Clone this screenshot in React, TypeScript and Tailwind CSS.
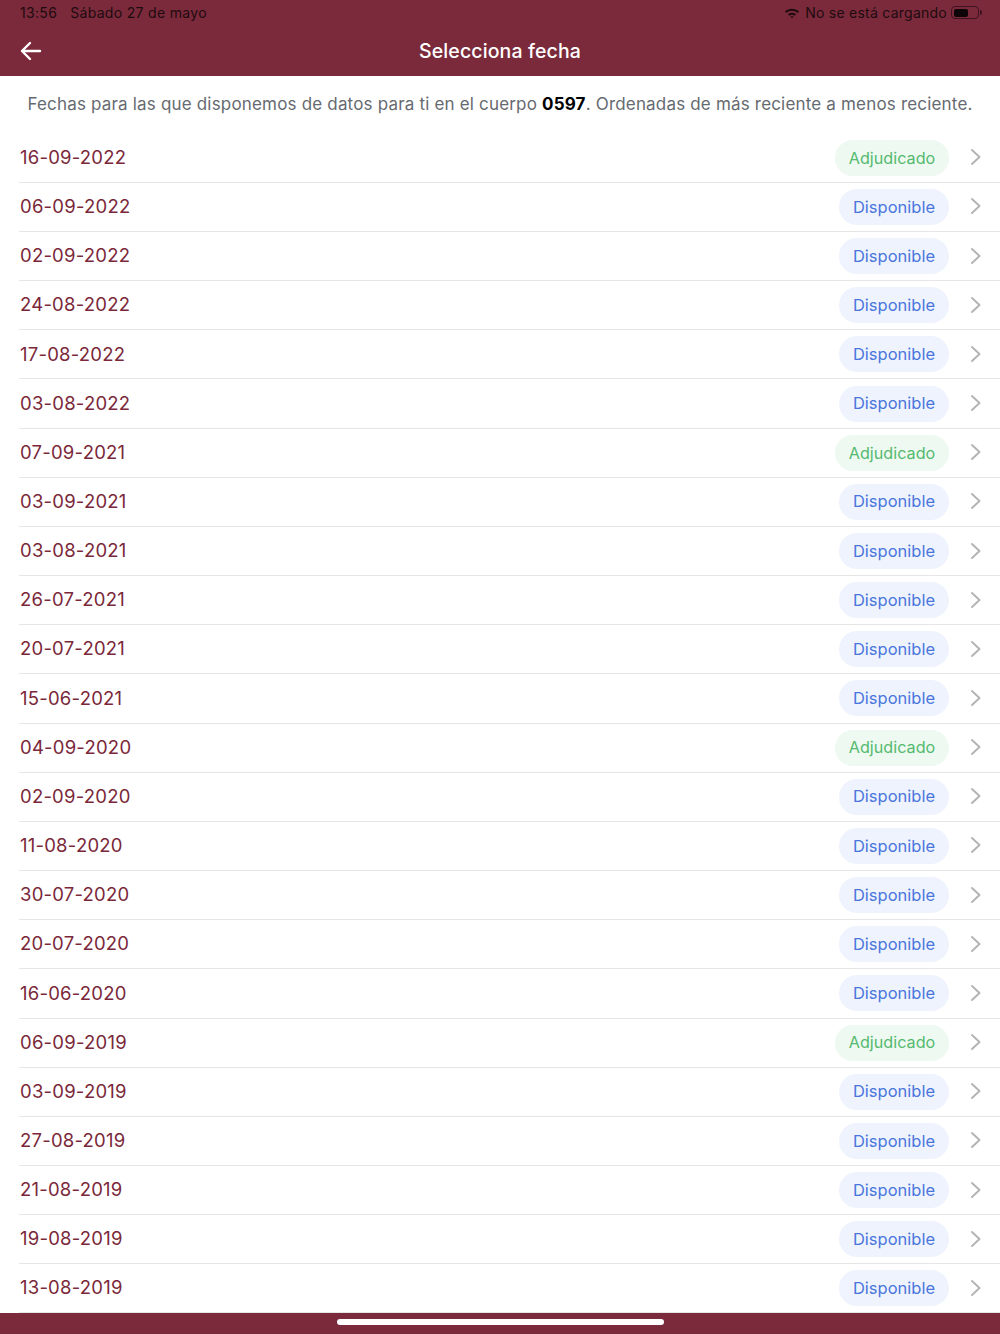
const rows: [string, boolean][] = [
  ["16-09-2022", true], ["06-09-2022", false], ["02-09-2022", false], ["24-08-2022", false],
  ["17-08-2022", false], ["03-08-2022", false], ["07-09-2021", true], ["03-09-2021", false],
  ["03-08-2021", false], ["26-07-2021", false], ["20-07-2021", false], ["15-06-2021", false],
  ["04-09-2020", true], ["02-09-2020", false], ["11-08-2020", false], ["30-07-2020", false],
  ["20-07-2020", false], ["16-06-2020", false], ["06-09-2019", true], ["03-09-2019", false],
  ["27-08-2019", false], ["21-08-2019", false], ["19-08-2019", false], ["13-08-2019", false],
];

function Row({ date, won }: { date: string; won: boolean }) {
  return (
    <div className="h-[49.17px] shrink-0 ml-[19px] flex items-center border-b border-[#e6e6e6] pr-[17px]">
      <span className="text-[18.5px] text-[#7a2839] flex-1 tracking-[0.22px] pl-[1px]">{date}</span>
      {won ? (
        <span className="h-[36px] w-[114px] rounded-full bg-[#eef9f1] text-[#55b96f] text-[16.2px] flex items-center justify-center">Adjudicado</span>
      ) : (
        <span className="h-[36px] w-[110px] rounded-full bg-[#eef3fe] text-[#4a76dc] text-[16.5px] flex items-center justify-center">Disponible</span>
      )}
      <svg className="ml-[20px] mb-[1px]" width="14" height="18" viewBox="0 0 14 18" fill="none" stroke="#b3b3b3" strokeWidth="1.9" strokeLinecap="round" strokeLinejoin="round">
        <path d="M3 2l7.5 7L3 16" />
      </svg>
    </div>
  );
}

export default function App() {
  return (
    <div className="w-[1000px] h-[1334px] bg-white flex flex-col overflow-hidden font-['Inter','Liberation_Sans',sans-serif]">
      <header className="h-[76px] shrink-0 bg-[#7b2a3b] flex flex-col">
        <div className="h-[25px] mb-[2px] flex items-center pl-[20px] pr-[18px] text-[14px] tracking-[0.32px] text-[#1e0a10]">
          <span>13:56</span>
          <span className="ml-[13px] flex-1">Sábado 27 de mayo</span>
          <svg width="16" height="12" viewBox="0 0 16 12" className="mr-[5px]" fill="#1e0a10">
            <path d="M1 4.6C5 .9 11 .9 15 4.6l-1.3 1.4C10.4 3 5.6 3 2.3 6z" />
            <path d="M4 7.3c2.4-2 5.6-2 8 0l-1.4 1.4c-1.6-1.2-3.6-1.2-5.2 0z" />
            <path d="M6.4 9.7c1-.7 2.2-.7 3.2 0L8 11.3z" />
          </svg>
          <span className="tracking-[0.25px]">No se está cargando</span>
          <span className="ml-[4px] w-[28px] h-[13px] rounded-[4px] border border-[#3f1420] p-[1.5px] flex">
            <span className="w-[14px] h-full rounded-[2px] bg-[#0d0507]" />
          </span>
          <span className="w-[2px] h-[5px] ml-[1px] rounded-r-full bg-[#3f1420]" />
        </div>
        <div className="relative h-[49px] flex items-center justify-center">
          <svg className="absolute left-[20px] top-[14px]" width="22" height="20" viewBox="0 0 22 20" fill="none" stroke="#ffffff" strokeWidth="2.4" strokeLinecap="round" strokeLinejoin="round">
            <path d="M20 10H2M10 2l-8 8 8 8" />
          </svg>
          <h1 className="text-white text-[19.5px] font-medium tracking-[0.13px]">Selecciona fecha</h1>
        </div>
      </header>
      <p className="h-[57.7px] shrink-0 pt-[17px] text-center text-[17px] leading-[22px] tracking-[0.18px] text-[#666a70]">
        Fechas para las que disponemos de datos para ti en el cuerpo <b className="text-black font-bold">0597</b>. Ordenadas de más reciente a menos reciente.
      </p>
      <main className="flex-1 min-h-0 flex flex-col overflow-hidden">
        {rows.map(([d, w]) => <Row key={d} date={d} won={w} />)}
      </main>
      <footer className="h-[21px] shrink-0 bg-[#7b2a3b] flex justify-center pt-[6px]">
        <div className="w-[327px] h-[6px] rounded-full bg-white" />
      </footer>
    </div>
  );
}
